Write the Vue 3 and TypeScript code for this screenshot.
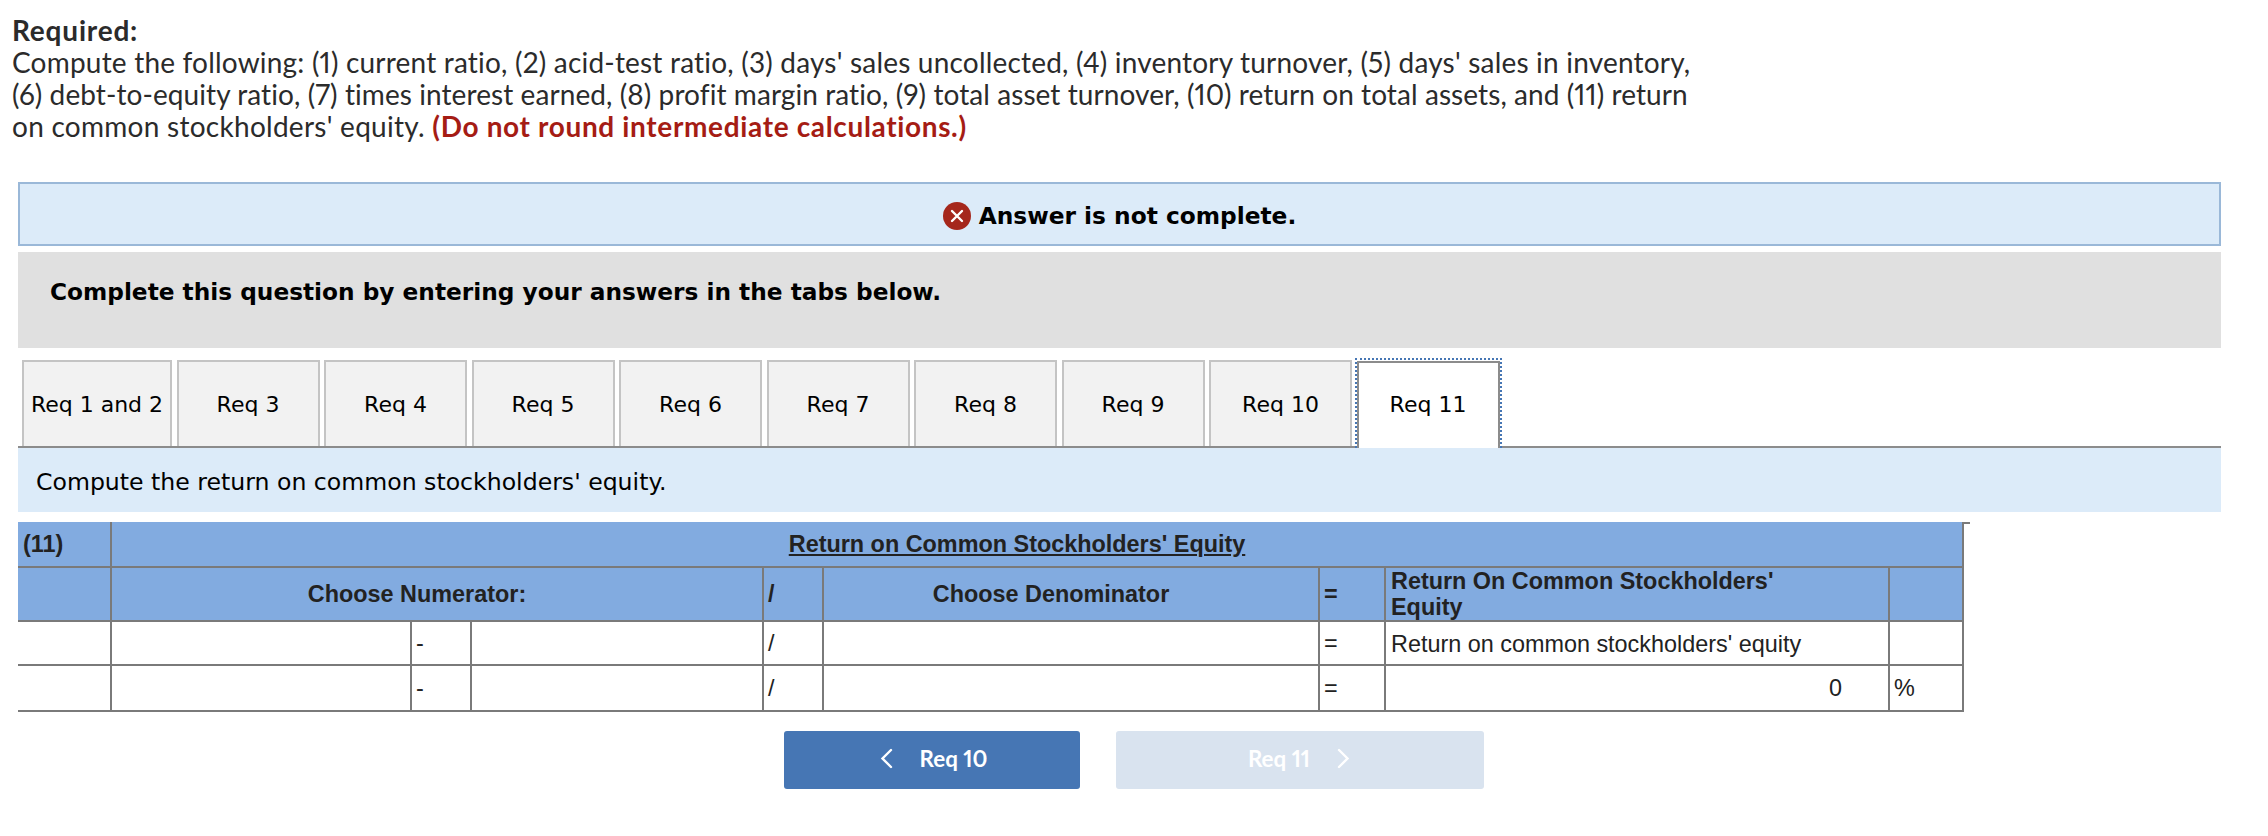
<script setup lang="ts">
const tabs = ['Req 3', 'Req 4', 'Req 5', 'Req 6', 'Req 7', 'Req 8', 'Req 9', 'Req 10']
</script>

<template>
  <main class="page">
    <section class="required">
      <strong class="req-title">Required:</strong>
      <p class="req-line l1">Compute the following: (1) current ratio, (2) acid-test ratio, (3) days' sales uncollected, (4) inventory turnover, (5) days' sales in inventory,</p>
      <p class="req-line l2">(6) debt-to-equity ratio, (7) times interest earned, (8) profit margin ratio, (9) total asset turnover, (10) return on total assets, and (11) return</p>
      <p class="req-line l3">on common stockholders' equity. <b class="warn">(Do not round intermediate calculations.)</b></p>
    </section>

    <section class="status">
      <svg class="x-icon" width="28" height="28" viewBox="0 0 28 28">
        <circle cx="14" cy="14" r="14" fill="#a5271c" />
        <path d="M9 9l10 10M19 9L9 19" stroke="#fff" stroke-width="2.4" stroke-linecap="round" />
      </svg>
      <span>Answer is not complete.</span>
    </section>

    <section class="complete">Complete this question by entering your answers in the tabs below.</section>

    <nav class="tabs">
      <div class="tab first">Req 1 and 2</div>
      <div v-for="t in tabs" :key="t" class="tab">{{ t }}</div>
      <div class="tab active">Req 11</div>
    </nav>

    <section class="prompt">Compute the return on common stockholders' equity.</section>

    <div class="table-wrap">
      <span class="tick"></span>
      <table class="ratio">
        <colgroup>
          <col class="c1" />
          <col class="c2" />
          <col class="c3" />
          <col class="c4" />
          <col class="c5" />
          <col class="c6" />
          <col class="c7" />
          <col class="c8" />
          <col class="c9" />
        </colgroup>
        <tbody>
          <tr class="head h1">
            <th class="left first-cell">(11)</th>
            <th colspan="8" class="shift"><u>Return on Common Stockholders' Equity</u></th>
          </tr>
          <tr class="head h2">
            <th></th>
            <th colspan="3" class="shift">Choose Numerator:</th>
            <th class="left">/</th>
            <th class="shift">Choose Denominator</th>
            <th class="left">=</th>
            <th class="left wrap">Return On Common Stockholders' Equity</th>
            <th></th>
          </tr>
          <tr class="r1">
            <td></td>
            <td></td>
            <td>-</td>
            <td></td>
            <td>/</td>
            <td></td>
            <td>=</td>
            <td class="label">Return on common stockholders' equity</td>
            <td></td>
          </tr>
          <tr class="r2">
            <td></td>
            <td></td>
            <td>-</td>
            <td></td>
            <td>/</td>
            <td></td>
            <td>=</td>
            <td class="num">0</td>
            <td>%</td>
          </tr>
        </tbody>
      </table>
    </div>

    <div class="nav-buttons">
      <button class="btn prev">
        <svg width="13" height="21" viewBox="0 0 13 21"><path d="M11 2L2.500 10.500l8.500 8.500" fill="none" stroke="#fff" stroke-width="2.400" stroke-linecap="round" /></svg>
        <span>Req 10</span>
      </button>
      <button class="btn next">
        <span>Req 11</span>
        <svg width="13" height="21" viewBox="0 0 13 21"><path d="M2 2l8.500 8.500L2 19" fill="none" stroke="#fff" stroke-width="2.400" stroke-linecap="round" /></svg>
      </button>
    </div>
  </main>
</template>

<style scoped>
.page {
  width: 2268px;
  height: 836px;
  background: #fff;
  overflow: hidden;
  box-sizing: border-box;
  padding-top: 14px;
}
.required {
  padding-left: 12px;
  font-family: Lato, "Open Sans", sans-serif;
  font-size: 28px;
  line-height: 32px;
  color: #2b2b2b;
  font-variant-numeric: proportional-nums;
}
.req-title {
  display: block;
  font-weight: 700;
  height: 32px;
  letter-spacing: 0.8px;
}
.req-line {
  margin: 0;
  white-space: nowrap;
}
.l1 {
  letter-spacing: 0.2px;
}
.l2 {
  letter-spacing: 0.08px;
}
.l3 {
  letter-spacing: 0.27px;
}
.warn {
  color: #a51c14;
  font-weight: 700;
  letter-spacing: 0.65px;
}
.status {
  margin: 40px 47px 0 18px;
  height: 64px;
  box-sizing: border-box;
  background: #dcebf9;
  border: 2px solid #9ab8d8;
  padding-top: 3px;
  display: flex;
  align-items: center;
  justify-content: center;
  gap: 8px;
  font-family: "DejaVu Sans", sans-serif;
  font-weight: 700;
  font-size: 23.3px;
  color: #000;
}
.complete {
  margin: 6px 47px 0 18px;
  height: 96px;
  box-sizing: border-box;
  background: #e0e0e0;
  padding: 0 0 18px 32px;
  display: flex;
  align-items: center;
  font-family: "DejaVu Sans", sans-serif;
  font-weight: 700;
  font-size: 23.25px;
  color: #000;
}
.tabs {
  margin: 12px 47px 0 18px;
  height: 88px;
  box-sizing: border-box;
  border-bottom: 2px solid #8c8c8c;
  padding-left: 4px;
  display: flex;
  gap: 4.5px;
}
.tab {
  width: 143px;
  height: 86px;
  box-sizing: border-box;
  background: #f2f2f2;
  border: 2px solid #c4c4c4;
  border-bottom: 0;
  display: flex;
  align-items: center;
  justify-content: center;
  font-family: "DejaVu Sans", sans-serif;
  font-size: 22px;
  color: #000;
}
.tab.first {
  width: 150px;
}
.tab.active {
  background: #fff;
  border: 2px solid #8c8c8c;
  border-bottom: 0;
  height: 87px;
  padding-bottom: 2px;
  margin: 1px 0 0 0;
  position: relative;
  z-index: 1;
}
.tab.active::after {
  content: "";
  position: absolute;
  left: -4px;
  right: -4px;
  top: -5px;
  bottom: 0;
  border: 2px dotted #4676b4;
  border-bottom: 0;
}
.prompt {
  margin: 0 47px 0 18px;
  height: 64px;
  box-sizing: border-box;
  background: #dcebf9;
  padding: 4px 0 0 18px;
  display: flex;
  align-items: center;
  font-family: "DejaVu Sans", sans-serif;
  font-size: 23.6px;
  color: #000;
}
.table-wrap {
  position: relative;
  margin: 10px 0 0 18px;
  width: 1945px;
}
.tick {
  position: absolute;
  left: 1945px;
  top: 0;
  width: 7px;
  height: 2px;
  background: #7a7a7a;
}
.ratio {
  width: 1945px;
  table-layout: fixed;
  border-collapse: collapse;
  font-family: "Liberation Sans", Arial, sans-serif;
  font-size: 23.4px;
  color: #222;
}
.c1 { width: 93px; }
.c2 { width: 300px; }
.c3 { width: 60px; }
.c4 { width: 292px; }
.c5 { width: 60px; }
.c6 { width: 496px; }
.c7 { width: 66px; }
.c8 { width: 504px; }
.c9 { width: 74px; }
.ratio th,
.ratio td {
  padding: 0 4px;
  border-left: 2px solid #7a7a7a;
  border-bottom: 2px solid #7a7a7a;
  line-height: 26px;
}
.ratio tr > :first-child {
  border-left: 0;
}
.ratio tr > :last-child {
  border-right: 2px solid #7a7a7a;
}
.head th {
  background: #82abe0;
  font-weight: 700;
  text-align: center;
}
.ratio th.shift {
  padding-right: 44px;
}
.ratio th.left {
  text-align: left;
}
.ratio th.first-cell {
  padding-left: 5px;
}
.ratio th.wrap {
  padding: 1px 60px 0 5px;
  line-height: 25.5px;
}
.h1 {
  height: 45px;
}
.h2 {
  height: 54px;
}
.r1 {
  height: 44px;
}
.r2 {
  height: 46px;
}
.ratio td.label {
  padding: 2px 4px 0 5px;
}
.ratio td.num {
  text-align: right;
  padding-right: 46px;
}
.nav-buttons {
  margin: 19px 0 0 784px;
  display: flex;
  gap: 36px;
}
.btn {
  height: 58px;
  border: 0;
  border-radius: 3px;
  display: flex;
  align-items: center;
  justify-content: center;
  gap: 27px;
  font-family: Lato, sans-serif;
  font-weight: 700;
  font-size: 22.4px;
  font-variant-numeric: proportional-nums;
  color: #fff;
  padding: 0 0 3px;
}
.prev {
  width: 296px;
  background: #4676b4;
  padding-left: 3px;
}
.next {
  width: 368px;
  background: #d9e3ef;
  padding-right: 2px;
}
</style>
